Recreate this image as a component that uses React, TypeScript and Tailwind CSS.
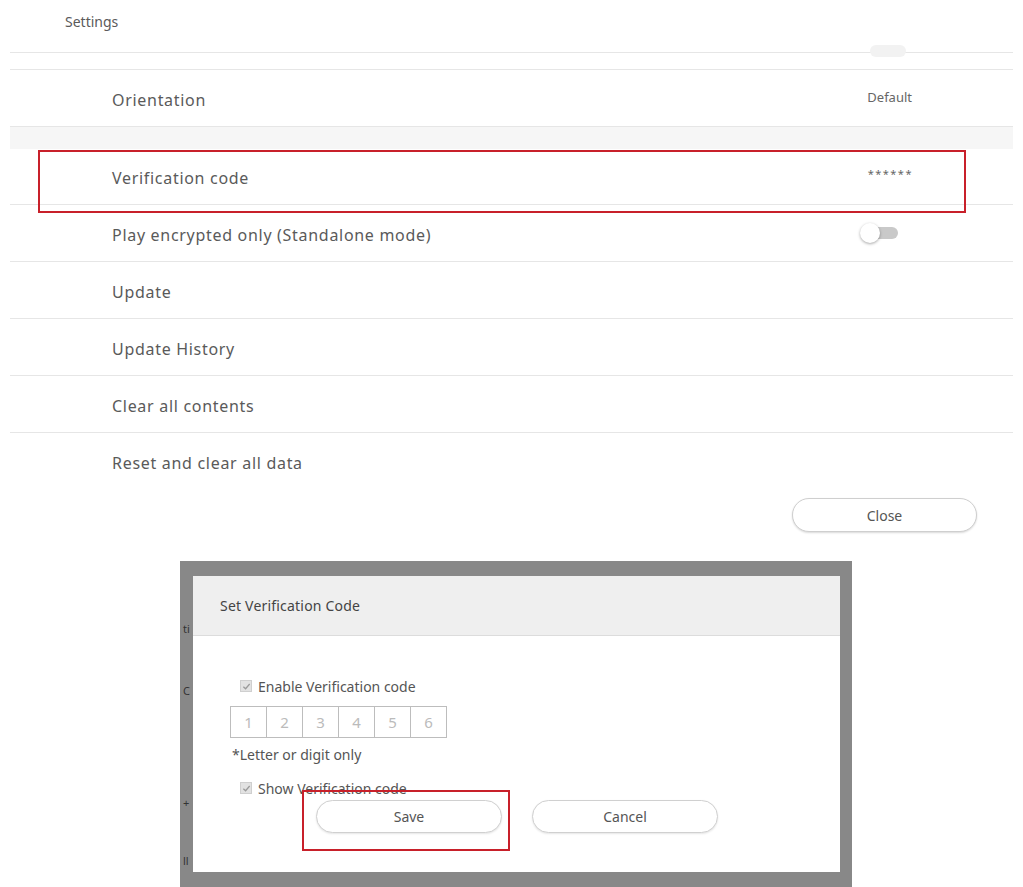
import React from "react";

const Row = ({
  label,
  right,
  border = true,
}: {
  label: string;
  right?: React.ReactNode;
  border?: boolean;
}) => (
  <div
    className={
      "flex items-center justify-between h-[57px] pl-[102px] pr-[103px] " +
      (border ? "border-b border-[#e6e6e6]" : "")
    }
  >
    <span className="text-[16px] tracking-[0.7px] text-[#5a5a5a] mt-[3px]">{label}</span>
    {right}
  </div>
);

const Toggle = () => (
  <div className="relative w-[40px] h-[20px] mr-[10px]">
    <div className="absolute left-[8px] top-[4px] w-[30px] h-[12px] rounded-full bg-[#c9c9c9]" />
    <div className="absolute left-0 top-0 w-[20px] h-[20px] rounded-full bg-white shadow-[0_1px_3px_rgba(0,0,0,0.35)]" />
  </div>
);

const Check = () => (
  <div className="w-[12px] h-[12px] bg-[#e2e2e2] border border-[#cfcfcf] flex items-center justify-center">
    <svg width="9" height="9" viewBox="0 0 10 10">
      <path d="M1.5 5.2 L4 7.5 L8.5 2.2" stroke="#9a9a9a" strokeWidth="1.4" fill="none" />
    </svg>
  </div>
);

export default function App() {
  return (
    <div className="relative w-[1023px] h-[887px] bg-white overflow-hidden font-['Noto_Sans',sans-serif]">
      <div className="h-[52px] pl-[65px] pt-[9px]">
        <span className="text-[14px] text-[#5a5a5a]">Settings</span>
      </div>
      <div className="mx-[10px]">
        <div className="h-[18px] border-t border-b border-[#e6e6e6] relative">
          <div className="absolute right-[107px] -top-[8px] w-[36px] h-[12px] rounded-full bg-[#f2f2f2]" />
        </div>
        <Row label="Orientation" right={<span className="text-[13px] text-[#666] mr-[-2px]">Default</span>} />
        <div className="h-[22px] bg-[#f6f6f6]" />
        <div className="flex items-center justify-between h-[56px] pl-[102px] pr-[103px] border-b border-[#e6e6e6]">
          <span className="text-[16px] tracking-[0.7px] text-[#5a5a5a] mt-[3px]">Verification code</span>
          <span className="text-[11px] text-[#666] tracking-[1.5px] -mt-[4px] mr-[-3px]">******</span>
        </div>
        <Row label="Play encrypted only (Standalone mode)" right={<Toggle />} />
        <Row label="Update" />
        <Row label="Update History" />
        <Row label="Clear all contents" />
        <Row label="Reset and clear all data" border={false} />
        <div className="flex justify-end pr-[36px] pt-[8px]">
          <button className="w-[185px] h-[34px] rounded-full border border-[#cfcfcf] shadow-[0_1px_2px_rgba(0,0,0,0.15)] text-[14px] text-[#555] bg-white">
            Close
          </button>
        </div>
      </div>

      {/* annotation: verification row */}
      <div className="absolute left-[38px] top-[150px] w-[928px] h-[63px] border-2 border-[#c8202a]" />

      {/* dialog */}
      <div className="absolute left-[180px] top-[561px] w-[672px] h-[340px] bg-[#888888] pl-[13px] pt-[15px] pr-[12px]">
        <div className="absolute left-[3px] top-[62px] text-[11px] text-[#333] leading-none">ti</div>
        <div className="absolute left-[3px] top-[124px] text-[11px] text-[#333] leading-none">C</div>
        <div className="absolute left-[3px] top-[236px] text-[11px] text-[#333] leading-none">+</div>
        <div className="absolute left-[3px] top-[294px] text-[11px] text-[#333] leading-none">ll</div>
        <div className="w-[647px] h-[296px] bg-white flex flex-col">
          <div className="h-[60px] bg-[#efefef] border-b border-[#dcdcdc] flex items-center pl-[27px]">
            <span className="text-[14px] tracking-[0.2px] text-[#444]">Set Verification Code</span>
          </div>
          <div className="pl-[47px] pt-[40px] flex flex-col">
            <div className="flex items-center gap-[6px] h-[20px]">
              <Check />
              <span className="text-[14px] text-[#555]">Enable Verification code</span>
            </div>
            <div className="flex -ml-[10px] mt-[10px]">
              {["1", "2", "3", "4", "5", "6"].map((d, i) => (
                <div
                  key={d}
                  className={
                    "w-[37px] h-[32px] border border-[#bdbdbd] flex items-center justify-center text-[15px] text-[#bbb] " +
                    (i > 0 ? "-ml-px" : "")
                  }
                >
                  {d}
                </div>
              ))}
            </div>
            <div className="-ml-[8px] mt-[6px] text-[14px] text-[#555] h-[20px]">*Letter or digit only</div>
            <div className="flex items-center gap-[6px] h-[20px] mt-[14px]">
              <Check />
              <span className="text-[14px] text-[#555]">Show Verification code</span>
            </div>
            <div className="flex gap-[30px] ml-[76px] mt-[2px]">
              <button className="w-[186px] h-[33px] rounded-full border border-[#d0d0d0] bg-white text-[14px] text-[#555] shadow-[0_1px_2px_rgba(0,0,0,0.1)]">
                Save
              </button>
              <button className="w-[186px] h-[33px] rounded-full border border-[#d0d0d0] bg-white text-[14px] text-[#555] shadow-[0_1px_2px_rgba(0,0,0,0.1)]">
                Cancel
              </button>
            </div>
          </div>
        </div>
      </div>

      {/* annotation: save button */}
      <div className="absolute left-[302px] top-[790px] w-[208px] h-[61px] border-2 border-[#c8202a]" />
    </div>
  );
}
